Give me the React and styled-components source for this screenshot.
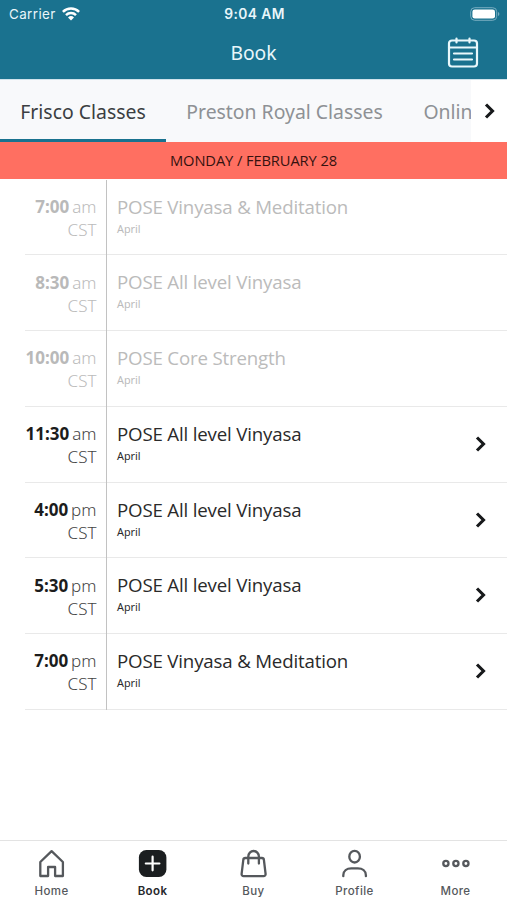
import React from 'react';
import styled, { createGlobalStyle } from 'styled-components';

const Global = createGlobalStyle`
  * { box-sizing: border-box; }
  html, body { margin: 0; background: #fff; overflow: hidden; }
  svg { display: block; flex: none; }
`;

const sans = '"Noto Sans", "Open Sans", sans-serif';
const openSans = '"Open Sans", "Noto Sans", sans-serif';
const system = 'Inter, "Liberation Sans", sans-serif';

const Screen = styled.div`
  width: 507px;
  height: 900px;
  display: flex;
  flex-direction: column;
  background: #fff;
  font-family: ${sans};
  overflow: hidden;
`;
const Header = styled.header`
  height: 79px;
  flex: none;
  background: #1a728f;
  color: #e9f6fa;
`;
const StatusBar = styled.div`
  height: 27px;
  display: grid;
  grid-template-columns: 1fr auto 1fr;
  align-items: center;
  padding: 0 7px 0 9px;
  font: 400 13.4px/28px ${system};
`;
const Carrier = styled.div`
  display: flex;
  align-items: center;
  gap: 6px;
  letter-spacing: 0.4px;
`;
const Clock = styled.div`
  font-weight: 600;
  font-size: 13.8px;
  letter-spacing: 0.4px;
`;
const Battery = styled.div`
  justify-self: end;
`;
const TitleBar = styled.div`
  height: 52px;
  display: grid;
  grid-template-columns: 1fr auto 1fr;
  align-items: center;
  padding: 0 28px;
`;
const Title = styled.h1`
  grid-column: 2;
  margin: 0;
  font-size: 19.3px;
  line-height: 50px;
  height: 50px;
  font-weight: 400;
`;
const CalendarButton = styled.div`
  justify-self: end;
`;
const Tabs = styled.nav`
  height: 63px;
  flex: none;
  display: flex;
  background: #f8f9fb;
  border-top: 1px solid #cfe3ec;
`;
const TabList = styled.div`
  width: 471px;
  display: flex;
  overflow: hidden;
`;
const Tab = styled.div`
  flex: none;
  height: 62px;
  padding: 0 20.3px;
  border-bottom: 3px solid ${(p) => (p.$active ? '#1a728f' : 'transparent')};
  color: ${(p) => (p.$active ? '#3b3e42' : '#8e9195')};
  font-size: 19.4px;
  line-height: 63px;
  white-space: nowrap;
`;
const TabScroll = styled.div`
  flex: 1;
  display: flex;
  align-items: center;
  padding-left: 13px;
  background: #fff;
`;
const DateBanner = styled.div`
  height: 37px;
  flex: none;
  background: #ff6f61;
  color: #35120f;
  font-family: ${openSans};
  font-size: 14.7px;
  letter-spacing: -0.1px;
  line-height: 37px;
  text-align: center;
`;
const ClassList = styled.main`
  flex: 1;
  padding-top: 0.5px;
`;
const ClassRow = styled.div`
  height: 75.75px;
  margin-left: 25px;
  display: grid;
  grid-template-columns: 82px 1fr 32px;
  border-bottom: 1px solid #e9e9e9;
  color: ${(p) => (p.$past ? '#bbb' : '#2a2a2a')};
`;
const TimeCell = styled.div`
  height: 75.75px;
  border-right: 1px solid #c2c2c2;
  padding: 15.4px 9.5px 0 0;
  text-align: right;
  color: ${(p) => (p.$past ? '#bbb' : '#444')};
  font-size: 17px;
  line-height: 23px;
  font-weight: 300;
  white-space: nowrap;
`;
const Time = styled.strong`
  font-weight: 700;
  margin-right: 3px;
  color: ${(p) => (p.$past ? '#b9b9b9' : '#1c1c1c')};
`;
const Details = styled.div`
  padding: 15.2px 0 0 10px;
`;
const ClassName = styled.div`
  font-family: ${openSans};
  font-size: 18.7px;
  letter-spacing: -0.18px;
  line-height: 23px;
  white-space: nowrap;
`;
const Teacher = styled.div`
  margin-top: 3px;
  font-size: 10.8px;
  line-height: 16px;
`;
const RowArrow = styled.div`
  padding-top: 28.2px;
`;
const BottomNav = styled.nav`
  height: 60px;
  flex: none;
  border-top: 1px solid #e3e3e3;
  display: grid;
  grid-template-columns: repeat(5, 101px);
  justify-content: center;
`;
const NavItem = styled.div`
  display: flex;
  flex-direction: column;
  align-items: center;
  padding-top: 8px;
  color: ${(p) => (p.$active ? '#26282b' : '#55585c')};
  font: ${(p) => (p.$active ? 600 : 500)} 11.5px/16px ${system};
  letter-spacing: 0.4px;
`;
const NavIcon = styled.div`
  height: 34px;
`;

const WifiIcon = () => (
  <svg width="18" height="14" viewBox="0 0 18 14" fill="none" stroke="#fff" strokeWidth="2.5">
    <path d="M.9 4.8a11.6 11.6 0 0 1 16.2 0M4 8.1a7.2 7.2 0 0 1 10 0" />
    <path d="M6 10.4a4.4 4.4 0 0 1 6 0L9 13.5Z" fill="#fff" stroke="none" />
  </svg>
);
const BatteryIcon = () => (
  <svg width="30" height="14" viewBox="0 0 30 14">
    <rect x=".7" y=".7" width="26" height="12.6" rx="4" fill="none" stroke="#78adc0" strokeWidth="1" />
    <rect x="2.4" y="2.4" width="22.6" height="9.2" rx="2.4" fill="#fff" />
    <path d="M28 5v4q1.4-.6 1.4-2t-1.4-2" fill="#78adc0" />
  </svg>
);
const CalendarIcon = () => (
  <svg width="32" height="32" viewBox="0 0 32 32" fill="none" stroke="#e9f8fc" strokeWidth="2.2" strokeLinecap="round">
    <rect x="2" y="3.5" width="28" height="26" rx="3" />
    <path d="M2 10.5h28M9.5 1.5v4M22.5 1.5v4M7 16.5h18M7 22.5h18" />
  </svg>
);
const Chevron = () => (
  <svg width="12" height="18" viewBox="0 0 12 18" fill="none" stroke="#17191b" strokeWidth="3.1" strokeLinejoin="miter">
    <path d="M2 2.5 8.5 9 2 15.5" />
  </svg>
);
const stroke = { fill: 'none', stroke: 'currentColor', strokeWidth: 2.3 };
const icons = {
  Home: <path {...stroke} d="M3.7 13 15 2.2 26.3 13V27h-7.800v-9h-7v9H3.700Z" strokeLinejoin="round" />,
  Book: (
    <>
      <rect x="1.3" y="1" width="27.5" height="27" rx="7.5" fill="#1b1e20" />
      <path d="M15 7.7v13.6M8.2 14.5h13.6" stroke="#fff" strokeWidth="2.2" strokeLinecap="round" />
    </>
  ),
  Buy: (
    <path
      {...stroke}
      d="M6.7 9h16.6a2 2 0 0 1 2 1.8L27 25a2 2 0 0 1-2 2.2H5A2 2 0 0 1 3 25L4.7 10.8A2 2 0 0 1 6.7 9ZM9.7 14.5V7.5a5.3 5.5 0 0 1 10.6 0v7"
      strokeLinecap="round"
    />
  ),
  Profile: (
    <>
      <ellipse {...stroke} cx="15" cy="7.7" rx="5.3" ry="5.8" />
      <path {...stroke} d="M3.7 27.2v-.9c0-4.6 3.6-7 8-7h6.6c4.4 0 8 2.4 8 7v.9" strokeLinecap="round" />
    </>
  ),
  More: (
    <>
      <circle {...stroke} cx="5.3" cy="14.5" r="2.6" />
      <circle {...stroke} cx="15.3" cy="14.5" r="2.6" />
      <circle {...stroke} cx="25.3" cy="14.5" r="2.6" />
    </>
  ),
};

const classes = [
  ['7:00', 'am', 'POSE Vinyasa & Meditation', true],
  ['8:30', 'am', 'POSE All level Vinyasa', true],
  ['10:00', 'am', 'POSE Core Strength', true],
  ['11:30', 'am', 'POSE All level Vinyasa', false],
  ['4:00', 'pm', 'POSE All level Vinyasa', false],
  ['5:30', 'pm', 'POSE All level Vinyasa', false],
  ['7:00', 'pm', 'POSE Vinyasa & Meditation', false],
];

export default function App() {
  return (
    <Screen>
      <Global />
      <Header>
        <StatusBar>
          <Carrier>Carrier <WifiIcon /></Carrier>
          <Clock>9:04 AM</Clock>
          <Battery><BatteryIcon /></Battery>
        </StatusBar>
        <TitleBar>
          <Title>Book</Title>
          <CalendarButton><CalendarIcon /></CalendarButton>
        </TitleBar>
      </Header>
      <Tabs>
        <TabList>
          <Tab $active>Frisco Classes</Tab>
          <Tab>Preston Royal Classes</Tab>
          <Tab>Onlin</Tab>
        </TabList>
        <TabScroll><Chevron /></TabScroll>
      </Tabs>
      <DateBanner>MONDAY / FEBRUARY 28</DateBanner>
      <ClassList>
        {classes.map(([time, half, name, past]) => (
          <ClassRow key={time + half} $past={past}>
            <TimeCell $past={past}><Time $past={past}>{time}</Time>{half}<br />CST</TimeCell>
            <Details>
              <ClassName>{name}</ClassName>
              <Teacher>April</Teacher>
            </Details>
            {!past && <RowArrow><Chevron /></RowArrow>}
          </ClassRow>
        ))}
      </ClassList>
      <BottomNav>
        {Object.keys(icons).map((label) => (
          <NavItem key={label} $active={label === 'Book'}>
            <NavIcon><svg width="30" height="30" viewBox="0.4 0 30 30">{icons[label]}</svg></NavIcon>
            {label}
          </NavItem>
        ))}
      </BottomNav>
    </Screen>
  );
}
